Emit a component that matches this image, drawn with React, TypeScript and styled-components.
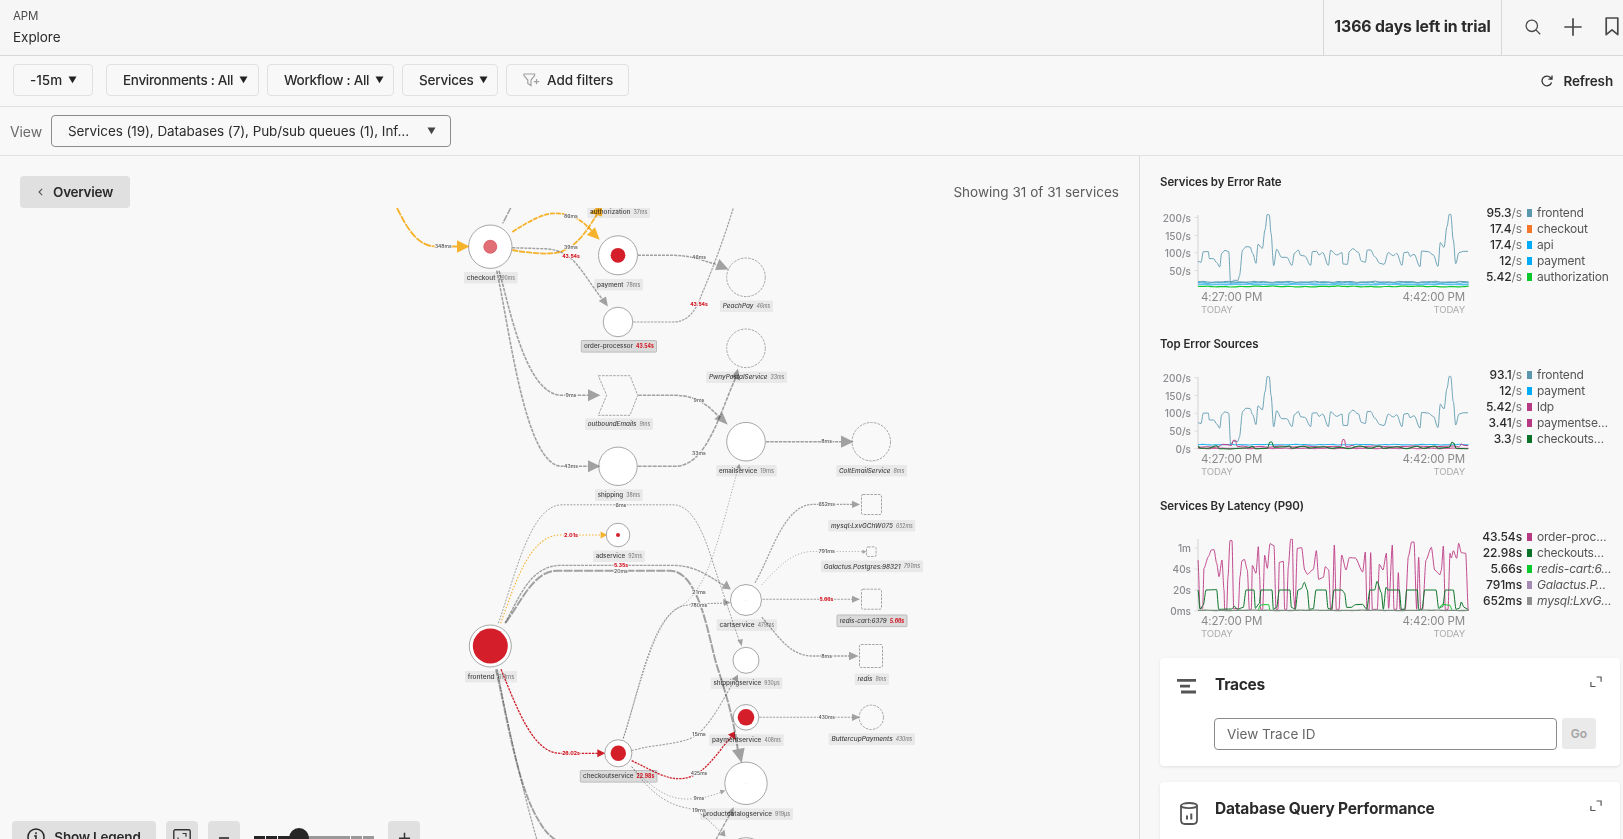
import React from "react";
import styled, { createGlobalStyle } from "styled-components";

const GlobalStyle = createGlobalStyle`
  * { box-sizing: border-box; }
  body { margin: 0; background: #f8f8f8; color: #2b2b2b; font-family: Inter, "Liberation Sans", sans-serif; font-size: 14px; overflow: hidden; }
  button, input { font: inherit; color: inherit; }
`;

const Page = styled.div`
  width: 1623px;
  height: 839px;
  overflow: hidden;
  display: flex;
  flex-direction: column;
`;

const Header = styled.header`
  display: flex;
  height: 56px;
  flex: none;
  background: #f6f6f6;
  border-bottom: 1px solid #d8d8d8;
`;
const Crumbs = styled.div`
  flex: 1;
  padding: 8px 0 0 13px;
`;
const Crumb = styled.div`
  font-size: 11.5px;
  line-height: 16px;
  letter-spacing: -0.2px;
  color: #4a4a4a;
`;
const PageName = styled.div`
  font-size: 13.5px;
  line-height: 20px;
  margin-top: 3px;
  letter-spacing: -0.05px;
`;
const Trial = styled.div`
  width: 179px;
  border: solid #d8d8d8;
  border-width: 0 1px;
  display: flex;
  align-items: center;
  justify-content: center;
  padding-bottom: 2px;
  font-size: 15.8px;
  font-weight: 700;
  letter-spacing: -0.12px;
  white-space: nowrap;
`;
const HeaderIcons = styled.div`
  width: 121px;
  display: flex;
  align-items: center;
  padding: 0 0 2px 23px;
  gap: 23px;
  svg { flex: none; }
`;

const FilterRow = styled.div`
  height: 51px;
  flex: none;
  display: flex;
  align-items: flex-start;
  padding: 8px 10px 0 13px;
  border-bottom: 1px solid #e1e1e1;
`;
const Filter = styled.button<{ $w: number; $gap: number; $ls: number }>`
  width: ${(p) => p.$w}px;
  height: 32px;
  margin-right: ${(p) => p.$gap}px;
  padding: 0 0 0 16px;
  display: flex;
  align-items: center;
  gap: 6px;
  border: 1px solid #e1e1e1;
  border-radius: 4px;
  background: transparent;
  font-size: 13.5px;
  font-weight: 500;
  letter-spacing: ${(p) => p.$ls}px;
  white-space: nowrap;
`;
const Refresh = styled.div`
  margin-left: auto;
  height: 34px;
  display: flex;
  align-items: center;
  gap: 10px;
  font-size: 13.5px;
  font-weight: 600;
  letter-spacing: -0.15px;
`;

const ViewRow = styled.div`
  height: 49px;
  flex: none;
  display: flex;
  align-items: center;
  padding-left: 10px;
  border-bottom: 1px solid #e1e1e1;
`;
const ViewLabel = styled.span`
  width: 41px;
  color: #6b6b6b;
  letter-spacing: -0.1px;
`;
const Select = styled.div`
  width: 400px;
  height: 32px;
  display: flex;
  align-items: center;
  justify-content: space-between;
  padding: 0 14px 0 16px;
  border: 1px solid #8c8c8c;
  border-radius: 4px;
  font-size: 13.5px;
  letter-spacing: -0.08px;
  white-space: nowrap;
`;

const Main = styled.main`
  flex: 1;
  min-height: 0;
  display: flex;
`;
const MapPane = styled.section`
  position: relative;
  width: 1139px;
  flex: none;
  display: flex;
  flex-direction: column;
`;
const MapTop = styled.div`
  height: 52px;
  flex: none;
  display: flex;
  align-items: center;
  justify-content: space-between;
  padding: 20px 20px 0;
`;
const Overview = styled.button`
  width: 110px;
  height: 32px;
  border: 0;
  border-radius: 4px;
  background: #e0e0e0;
  display: flex;
  align-items: center;
  gap: 10px;
  padding: 0 0 0 18px;
  font-size: 13.5px;
  font-weight: 600;
  letter-spacing: -0.25px;
`;
const Showing = styled.span`
  font-size: 13.5px;
  color: #5c5c5c;
  letter-spacing: 0.03px;
`;
const MapSvg = styled.svg`
  display: block;
  flex: none;
`;
const Controls = styled.div`
  position: absolute;
  left: 12px;
  top: 665px;
  display: flex;
  align-items: flex-start;
`;
const ControlButton = styled.button<{ $w: number; $gap: number }>`
  width: ${(p) => p.$w}px;
  height: 32px;
  margin-right: ${(p) => p.$gap}px;
  padding: 0;
  display: flex;
  align-items: center;
  justify-content: center;
  gap: 9px;
  border: 0;
  border-radius: 4px;
  background: #e0e0e0;
  font-size: 13.5px;
  font-weight: 600;
  letter-spacing: -0.2px;
`;
const Slider = styled.div`
  position: relative;
  display: flex;
  gap: 0.7px;
  width: 120px;
  margin: 15px 14px 0 0;
`;
const Segment = styled.i<{ $on: boolean }>`
  flex: 1;
  height: 5px;
  background: ${(p) => (p.$on ? "#262626" : "#999")};
`;
const Knob = styled.i`
  position: absolute;
  left: 35px;
  top: -8px;
  width: 20px;
  height: 20px;
  border-radius: 50%;
  background: #262626;
`;

const Side = styled.aside`
  flex: 1;
  border-left: 1px solid #dcdcdc;
  padding-left: 20px;
`;
const ChartBlock = styled.div`
  height: 162px;
  padding-top: 18px;
`;
const ChartTitle = styled.h3<{ $ls: number }>`
  margin: 0;
  height: 16px;
  line-height: 16px;
  font-size: 11.5px;
  font-weight: 600;
  letter-spacing: ${(p) => p.$ls}px;
`;
const ChartRow = styled.div`
  display: flex;
  margin-top: 15px;
`;
const AxisY = styled.div`
  position: relative;
  width: 31px;
  height: 80px;
  font-size: 10px;
  font-weight: 500;
  color: #8a8a90;
`;
const Tick = styled.span<{ $top: number }>`
  position: absolute;
  right: 0;
  top: ${(p) => p.$top - 6}px;
  line-height: 12px;
  white-space: nowrap;
`;
const Plot = styled.div`
  width: 276px;
  margin-left: 3px;
`;
const Times = styled.div`
  display: flex;
  justify-content: space-between;
  padding: 0 5px 0 7px;
`;
const Time = styled.div<{ $right?: boolean }>`
  text-align: ${(p) => (p.$right ? "right" : "left")};
  font-size: 11.5px;
  line-height: 14px;
  color: #8a8a8a;
  letter-spacing: -0.15px;
`;
const Today = styled.div`
  font-size: 9.6px;
  line-height: 11px;
  color: #acacac;
  letter-spacing: -0.15px;
`;
const Legend = styled.div`
  margin: 0;
  width: 145px;
`;
const LegendItem = styled.div<{ $italic?: boolean }>`
  height: 16px;
  display: flex;
  align-items: center;
  font-size: 12px;
  line-height: 16px;
  letter-spacing: -0.1px;
  white-space: nowrap;
  em { font-style: ${(p) => (p.$italic ? "italic" : "normal")}; color: #555; letter-spacing: -0.2px; }
  b { width: 52px; text-align: right; font-weight: 500; }
  b span { font-weight: 400; color: #777; }
`;
const Swatch = styled.i<{ $c: string }>`
  width: 5px;
  height: 8px;
  margin: 0 5px;
  background: ${(p) => p.$c};
`;

const Card = styled.div<{ $h: number }>`
  position: relative;
  width: 460px;
  height: ${(p) => p.$h}px;
  margin: 16px 0 0;
  padding: 0 0 0 16px;
  display: grid;
  grid-template-columns: 39px 1fr;
  align-content: start;
  border-radius: 4px;
  background: #fff;
  box-shadow: 0 1px 3px rgba(0, 0, 0, 0.1);
`;
const CardIcon = styled.div`
  padding-top: 20px;
`;
const CardHead = styled.div`
  display: flex;
  justify-content: space-between;
  height: 60px;
  padding: 18px 18px 0 0;
`;
const CardTitle = styled.h2<{ $ls: number }>`
  margin: 0;
  font-size: 15.5px;
  line-height: 18px;
  font-weight: 700;
  letter-spacing: ${(p) => p.$ls}px;
`;
const CardForm = styled.div`
  grid-column: 2;
  display: flex;
  gap: 5px;
  margin-left: -1px;
`;
const Input = styled.input`
  width: 343px;
  height: 32px;
  padding: 0 12px;
  border: 1px solid #8c8c8c;
  border-radius: 4px;
  background: #fff;
  font-size: 13.5px;
  outline: none;
  &::placeholder { color: #666; opacity: 1; }
`;
const Go = styled.button`
  width: 34px;
  height: 31px;
  padding: 0;
  border: 0;
  border-radius: 3px;
  background: #eaeaea;
  color: #a3a3a3;
  font-size: 12px;
  font-weight: 600;
`;

const Caret = ({ soft }: { soft?: boolean }) => (
  <svg width="9" height="8" viewBox="0 0 9 8"><path d="M0.5 0.5h8L4.5 7.3z" fill={soft ? "#444" : "#222"} /></svg>
);
const ExpandIcon = () => (
  <svg width="12" height="12" viewBox="0 0 12 12" fill="none" stroke="#555" strokeWidth="1.2"><path d="M6.5 1h4.6v4.8M.9 6v4.5h4.6" /></svg>
);

/* ---------- service map ---------- */
type Shape = "circle" | "square" | "chevron";
interface NodeDef {
  name: string; ms: string; x: number; y: number; r: number; box: [number, number, number];
  red?: number; pink?: boolean; inferred?: boolean; hot?: boolean; shape?: Shape;
}
const nodes: NodeDef[] = [
  { name: "authorization", ms: "37ms", x: 618, y: 176, r: 19, box: [587.3, 650, 206.3] },
  { name: "checkout", ms: "290ms", x: 490.3, y: 246.7, r: 21.7, red: 6.7, pink: true, box: [464, 517.7, 272] },
  { name: "payment", ms: "78ms", x: 618, y: 255.3, r: 19.5, red: 7.4, box: [594.3, 643, 279] },
  { name: "order-processor", ms: "43.54s", x: 618, y: 322, r: 14.8, hot: true, box: [581.3, 656.5, 340.5] },
  { name: "outboundEmails", ms: "9ms", x: 618, y: 395.3, r: 19, inferred: true, shape: "chevron", box: [585, 653, 418.3] },
  { name: "shipping", ms: "38ms", x: 618, y: 466.3, r: 19.2, box: [595, 642.7, 489.3] },
  { name: "PeachPay", ms: "46ms", x: 746, y: 277.3, r: 19.3, inferred: true, box: [720, 773, 300.4] },
  { name: "PwnyPostalService", ms: "33ms", x: 746, y: 348.3, r: 19.3, inferred: true, box: [706.3, 787, 371.4] },
  { name: "emailservice", ms: "19ms", x: 746, y: 441.7, r: 19.3, box: [716.3, 776.7, 465] },
  { name: "ColtEmailService", ms: "8ms", x: 871.3, y: 441.7, r: 19.2, inferred: true, box: [836.3, 907, 465] },
  { name: "adservice", ms: "92ms", x: 618, y: 535, r: 11.8, red: 2, box: [593, 644.7, 550.5] },
  { name: "cartservice", ms: "479ms", x: 746, y: 600, r: 15.5, red: 0.3, box: [716.7, 777, 619.3] },
  { name: "shippingservice", ms: "930µs", x: 746, y: 660.3, r: 13, box: [710.7, 782.3, 677.4] },
  { name: "paymentservice", ms: "408ms", x: 746, y: 717.3, r: 12.8, red: 8.3, box: [709.3, 783.7, 734.3] },
  { name: "productcatalogservice", ms: "919µs", x: 746, y: 783.3, r: 21.2, red: 0.2, box: [700.3, 793, 808.3] },
  { name: "", ms: "", x: 746, y: 859, r: 21.3, box: [0, 0, 0] },
  { name: "mysql:LxvGChW075", ms: "652ms", x: 871.5, y: 504.5, r: 10, inferred: true, shape: "square", box: [828.3, 915.3, 520] },
  { name: "Galactus.Postgres:98321", ms: "791ms", x: 871.3, y: 551.7, r: 4.8, inferred: true, shape: "square", box: [821, 923, 560.6] },
  { name: "redis-cart:6379", ms: "5.66s", x: 871.5, y: 599.2, r: 10, inferred: true, hot: true, shape: "square", box: [837, 907, 615] },
  { name: "redis", ms: "8ms", x: 871, y: 656, r: 11.5, inferred: true, shape: "square", box: [854.7, 889, 673.4] },
  { name: "ButtercupPayments", ms: "430ms", x: 871.3, y: 717.3, r: 12.2, inferred: true, box: [828.7, 915, 733.3] },
  { name: "frontend", ms: "611ms", x: 490.3, y: 646, r: 21, red: 17.5, box: [465, 517, 671] },
  { name: "checkoutservice", ms: "22.98s", x: 618.3, y: 753.3, r: 13.6, red: 7.7, hot: true, box: [580.3, 657, 770.5] },
];

const GRAY = "#a6a6a6";
const ORANGE = "#fdb72c";
const RED = "#d41f2a";
interface EdgeDef { d: string; w?: number; dash?: string; c?: string; head?: string; label?: [string, number, number]; hotLabel?: boolean }
const edges: EdgeDef[] = [
  { d: "M397 208C408 230 418 246.3 436 246.5H458", w: 1.8, dash: "8 1", c: ORANGE, head: "457,240.2 469.5,246.5 457,252.8", label: ["348ms", 443.3, 246.4] },
  { d: "M510.7 208L502.7 223.3", w: 1.5, dash: "7 1" },
  { d: "M512.3 232C532 219 545 213.3 555 213.3C575 213.3 584 223 592 231", w: 1.8, dash: "5 1", c: ORANGE, head: "586.8,235 595,227.3 599.7,239.7", label: ["86ms", 571, 216.2] },
  { d: "M512.3 247.7L546 248.8C575 251 580 271 603 300", w: 1.4, dash: "3 1", head: "598.7,301 606,296.4 607.9,306.5", label: ["43.54s", 571, 256.2], hotLabel: true },
  { d: "M512.3 250C527 253 552 255.5 562 251.3C580 244 588 228 598 213", w: 1.8, dash: "6 1", c: ORANGE, head: "590,213 602,216.5 602,203", label: ["39ms", 571, 247.3] },
  { d: "M499 270.7C509 304 525 395.3 562 395.3H589", w: 1.6, dash: "3.5 1", head: "588,389.3 600.4,395.3 588,401.3", label: ["9ms", 571, 395.3] },
  { d: "M496.7 270.7C510 330 525 466.3 562 466.3H589", w: 1.6, dash: "3.5 1", head: "588,460.3 600.4,466.3 588,472.3", label: ["43ms", 571, 466.3] },
  { d: "M638 255.3H673C692 255.5 704 261 718 265", w: 1.5, dash: "3 1", head: "715,270 719.3,259 728.6,269.4", label: ["46ms", 699, 257] },
  { d: "M633.3 322H673C694 322 699 300 704 289C715 263 725 235 733.3 208", w: 1.2, dash: "2.5 1", label: ["43.54s", 699, 304.2], hotLabel: true },
  { d: "M638.3 395.3H675C697 395.5 709 406 719 417", w: 1.6, dash: "3.5 1", head: "714.3,419 722.5,412.8 727.8,424.8", label: ["9ms", 699, 400.2] },
  { d: "M637.7 466.3H675C707 466.3 720 412 736 377", w: 1.6, dash: "4 1", head: "731.3,377 740,380.5 738,368.5", label: ["33ms", 699, 453.2] },
  { d: "M766 441.7H842", w: 1.6, dash: "3.5 .8", head: "841,435.6 853.6,441.7 841,447.8", label: ["8ms", 826.7, 441.3] },
  { d: "M498.3 623.3C515 577 530 504.8 562 504.8H673C698 504.8 709 552 718 578L739 640", w: 1, dash: "2 1.3", head: "737.4,640.3 742.8,639.1 741.7,646.2", label: ["6ms", 621, 505.2] },
  { d: "M500.7 623.3C515 583 530 535.3 560 535H601", w: 1.1, dash: "1.5 1.7", c: ORANGE, head: "600.6,531.6 606.9,535 600.6,538.4", label: ["2.01s", 571, 535], hotLabel: true },
  { d: "M505 623.3C519 598 530 566 560 565.4H673C696 565.4 710 577 725 586", w: 1.4, dash: "3 .9", head: "721.6,588.5 726.7,580.6 730.9,589.4" },
  { d: "M505.7 622.7C522 600 534 571 557 570.7H670C702 571 710 650 719 672C727 697 735 725 738 752", w: 2, dash: "9 1.3", head: "732,750.3 744.6,747.8 741.7,763" },
  { d: "M501 669.3C517 708 533 753.3 560 753.3H598", w: 1.3, dash: "2.4 1", c: RED, head: "597.3,749.3 605.2,753.3 597.3,757.3", label: ["26.02s", 571, 753.2], hotLabel: true },
  { d: "M496 669.3C507 718 518 788 539 821Q546 834 556 840", w: 1.9, dash: "7 1" },
  { d: "M497.3 669.3C506 718 523 792 537 840", w: 1.2, dash: "2.5 1" },
  { d: "M623.3 738.3C640 687 653 611 685 605.5C700 602.5 713 604 724 603", w: 1.1, dash: "2 1.1", head: "723,599 730.6,602.4 724,606", label: ["780ms", 699, 605.2] },
  { d: "M623.3 738.3C640 687 654 621 678 608C692 600 699 588 707 571C717 548 727 510 738 468", w: 0.9, dash: "1.2 1.8", head: "736.2,468 741,469.2 739.3,463.8", label: ["21ms", 699, 592.2] },
  { d: "M631.7 750.7C650 745 670 745 686 740C705 736 720 705 734 681", w: 1.1, dash: "2.2 1.3", head: "731.7,679 738,682 738,674.4", label: ["15ms", 699, 734] },
  { d: "M631.7 760.7C650 769 664 778.7 678.5 778.7C703 779 716 754 731 737", w: 1.3, dash: "2.2 1", c: RED, head: "728,734.5 735.5,740 734.8,731.6", label: ["425ms", 699, 773] },
  { d: "M631.7 766.7C651 787 666 799 687 799C703 799 713 795 722 792", w: 0.9, dash: "1.3 1.7", head: "719.8,789.7 721.2,794.5 725.3,790.4", label: ["9ms", 699, 798.3] },
  { d: "M631.7 766.7C651 794 669 805 687 808C704 812 713 826 722 833", w: 1, dash: "1.8 1.5", head: "719.2,835 724.5,829.4 725.5,836.6", label: ["19ms", 699, 810] },
  { d: "M715.7 840L730 814", w: 1.4, dash: "4 1", head: "726.5,813.7 733.5,816.2 733.7,807" },
  { d: "M755 582.7C771 556 783 506 812 504.4H853", w: 1.2, dash: "2.3 1", head: "852,500.8 860,504.4 852,508", label: ["652ms", 826.7, 504.1] },
  { d: "M761.7 585C774 572 790 551.7 812 551.5H863", w: 0.9, dash: "1 2", head: "862.3,549.7 866.6,551.7 862.3,553.7", label: ["791ms", 826.7, 551.1] },
  { d: "M762.7 599.3H853", w: 1.1, dash: "2.3 1.1", head: "852,595.7 860,599.2 852,602.7", label: ["5.66s", 826.4, 599], hotLabel: true },
  { d: "M761.7 617.3C775 631 788 656 812 656H850", w: 1.3, dash: "2.5 1", head: "849,651.7 858.6,656 849,660.3", label: ["8ms", 826.7, 656] },
  { d: "M759.3 717.3H853", w: 1.1, dash: "2.3 1.1", head: "852,713.7 860,717.3 852,720.9", label: ["430ms", 826.7, 717.1] },
];

const latencyWidth = (s: string) =>
  s === "5.66s" ? 14.5 : s.endsWith("µs") ? 15.3 : s.length === 3 ? 10.8 : s.length === 4 ? 13.8 : s.length === 5 ? 16.6 : 17.7;

const Latency = styled.text<{ $hot?: boolean }>`
  font-size: 5.5px;
  font-weight: ${(p) => (p.$hot ? 800 : 500)};
  fill: ${(p) => (p.$hot ? RED : "#848484")};
`;
const NodeName = styled.text`
  font-size: 6.1px;
  font-weight: 500;
  fill: #444;
`;
const EdgeLabel = styled.text<{ $hot?: boolean }>`
  font-size: 5.4px;
  font-weight: ${(p) => (p.$hot ? 800 : 500)};
  fill: ${(p) => (p.$hot ? RED : "#555")};
  stroke: #f8f8f8;
  stroke-width: 1.6px;
  paint-order: stroke;
`;
/* connectors darken the labels they cross instead of hiding them */
const EdgeGroup = styled.g`
  mix-blend-mode: multiply;
`;

function MapNode({ n }: { n: NodeDef }) {
  const line = { stroke: GRAY, strokeWidth: 1, strokeDasharray: n.inferred ? "2.6 1.1" : undefined, fill: n.inferred ? "#f9f9f9" : "#fff" };
  const [x1, x2, y] = n.box;
  const msW = latencyWidth(n.ms);
  const nameW = x2 - x1 - 5.4 - msW - 3;
  return (
    <g fontStyle={n.inferred ? "italic" : undefined}>
      {n.shape === "chevron" ? (
        <path d="M598.3 375.7H630L637.7 395.3L630 415.3H598.3L606.7 395.3Z" {...line} />
      ) : n.shape === "square" ? (
        <rect x={n.x - n.r} y={n.y - n.r} width={n.r * 2} height={n.r * 2} rx={1.5} {...line} />
      ) : (
        <circle cx={n.x} cy={n.y} r={n.r} {...line} />
      )}
      {n.red && <circle cx={n.x} cy={n.y} r={n.red} fill={n.pink ? "url(#hatch)" : RED} />}
      {n.name && (
        <>
          <rect x={x1} y={y} width={x2 - x1} height={11.6} rx={0.8} fill={n.hot ? "#dadada" : "#e9e9e9"} stroke={n.hot ? "#bcbcbc" : "none"} />
          <NodeName x={x1 + 2.7} y={y + 7.9} textLength={nameW} lengthAdjust="spacingAndGlyphs">{n.name}</NodeName>
          <Latency $hot={n.hot} x={x2 - 2.7 - msW} y={y + 7.8} textLength={msW} lengthAdjust="spacingAndGlyphs">{n.ms}</Latency>
        </>
      )}
    </g>
  );
}

function MapEdge({ e }: { e: EdgeDef }) {
  return (
    <EdgeGroup>
      <path d={e.d} fill="none" stroke={e.c ?? GRAY} strokeWidth={e.w} strokeDasharray={e.dash} />
      {e.head && <polygon points={e.head} fill={e.c ?? GRAY} />}
    </EdgeGroup>
  );
}

const edgeLabels: { t: string; x: number; y: number; hot?: boolean }[] = [
  ...edges.filter((e) => e.label).map((e) => ({ t: e.label![0], x: e.label![1], y: e.label![2], hot: e.hotLabel })),
  { t: "20ms", x: 621, y: 570.8 },
  { t: "5.35s", x: 621, y: 565.3, hot: true },
];

const ServiceMap = () => (
  <MapSvg width="1139" height="631" viewBox="0 208 1139 631">
    <defs>
      <pattern id="hatch" width="1.4" height="1.4" patternUnits="userSpaceOnUse">
        <rect width="1.4" height="1.4" fill="#ea8a8f" />
        <path d="M0 0L1.4 1.4M1.4 0L0 1.4" stroke="#d9545c" strokeWidth=".35" />
      </pattern>
    </defs>
    {nodes.map((n, i) => <MapNode key={i} n={n} />)}
    {edges.map((e, i) => <MapEdge key={i} e={e} />)}
    <circle cx={490.3} cy={246.7} r={6.5} fill="none" stroke="#d9535b" strokeWidth=".6" />
    {edgeLabels.map((l, i) => {
      const w = l.t === "5.66s" || l.t === "5.35s" || l.t === "2.01s" ? 14 : latencyWidth(l.t);
      return (
        <EdgeLabel key={i} $hot={l.hot} x={l.x - w / 2} y={l.y + 1.9} textLength={w} lengthAdjust="spacingAndGlyphs">{l.t}</EdgeLabel>
      );
    })}
  </MapSvg>
);

/* ---------- charts ---------- */
const parse = (s: string) => s.trim().split(/\s+/).map((p) => p.split(",").map(Number) as [number, number]);
const smooth = (pts: [number, number][], k = 0.35) =>
  pts.map(([x, y], i) => {
    if (!i) return `M${x} ${y}`;
    const [px, py] = pts[i - 1];
    const dx = (x - px) * k;
    return `C${px + dx} ${py} ${x - dx} ${y} ${x} ${y}`;
  }).join("");
const wave = (base: number, amp: number, seed: number): [number, number][] =>
  Array.from({ length: 59 }, (_, i) => [174 + i * 14, base + Math.round(Math.sin(i * seed) * Math.cos(i * 0.7 + seed) * amp * 10) / 10]);

const frontend = parse(`174,274 183,277 190,245 205,245 208,266 221,266 230,278 239,291 245,250 255,241 266,245 272,340 280,331 294,331 298,318 308,240 318,230 330,231 338,250 348,280 354,223 367,235 375,180 382,133 388,135 393,190 401,287 410,238 425,262 440,262 456,286 463,250 475,240 482,256 494,258 512,286 517,245 530,244 537,255 548,248 565,286 572,241 590,255 606,248 609,282 622,283 628,245 638,236 655,247 664,273 676,277 682,240 692,240 704,260 720,280 732,283 745,248 760,257 770,250 786,286 792,248 804,246 810,259 822,253 840,290 845,243 865,245 880,255 894,289 901,218 912,232 921,170 928,133 932,133 940,210 947,281 957,248 970,244 984,244`);
const frontendSources = frontend.map(([x, y]) => [x, 139 + (y - 133) * 0.985] as [number, number]);
const orderProcessor = parse(`174,210 180,355 188,355 192,235 205,200 214,180 222,179 230,220 237,260 246,210 252,300 254,358 260,358 264,260 270,152 276,152 281,356 295,356 300,260 306,212 313,208 322,240 328,358 334,358 337,226 348,250 355,170 359,260 362,358 368,358 374,196 382,235 390,161 402,167 408,358 414,358 418,217 430,214 434,358 440,358 445,230 452,148 457,148 461,320 465,358 472,175 485,173 494,240 502,253 520,238 529,182 536,268 550,262 556,230 566,240 572,358 577,358 583,165 589,358 597,358 605,195 618,240 628,203 646,204 668,246 676,186 681,358 687,358 692,188 697,358 712,358 718,223 729,240 739,190 746,355 757,165 762,358 770,358 775,248 780,358 796,358 805,200 815,156 822,156 830,358 836,202 842,358 848,358 858,210 874,172 884,240 900,254 904,240 910,168 916,358 924,358 930,190 934,204 940,182 950,205 956,160 964,188 977,190 985,362`);
const checkouts = parse(`174,300 180,358 190,345 198,300 230,299 236,358 275,357 284,349 292,358 310,352 318,300 342,300 346,355 358,340 363,300 396,300 400,358 410,352 418,300 450,300 454,352 466,358 474,300 484,296 493,277 502,300 508,358 520,356 528,300 558,300 564,355 574,358 582,300 606,300 614,310 620,352 634,352 646,344 668,343 680,358 690,300 704,300 711,274 724,308 730,358 738,292 744,300 778,300 784,358 794,358 800,300 832,300 836,358 846,358 854,300 888,300 896,355 908,350 916,300 940,300 948,358 958,355 964,336 972,352 984,358`);

interface Series { pts: [number, number][]; c: string; w?: number; k?: number }
const SLATE = "#5f9bb0", SKY = "#25b4ef", GREEN = "#10c92f", PINK = "#bd3d87", FOREST = "#0c7429";

interface ChartDef {
  title: string; ls: number; y0: number; ticks: [string, number][]; series: Series[];
  legend: { v: string; unit?: string; c: string; name: string; italic?: boolean }[];
}
const charts: ChartDef[] = [
  {
    title: "Services by Error Rate", ls: -0.08, y0: 120,
    ticks: [["200/s", 7.5], ["150/s", 25.5], ["100/s", 42.7], ["50/s", 60.5]],
    series: [
      { pts: wave(343, 1, 1.3), c: "#58c3f4", w: 5 },
      { pts: wave(338, 2, 2.1), c: "#1f9fd0", w: 2.5 },
      { pts: wave(335.5, 2, 1.7), c: SLATE, w: 3 },
      { pts: wave(349.5, 1.6, 1.1), c: GREEN, w: 3.6 },
      { pts: frontend, c: SLATE },
    ],
    legend: [
      { v: "95.3", unit: "/s", c: "#5b98ad", name: "frontend" },
      { v: "17.4", unit: "/s", c: "#f4772a", name: "checkout" },
      { v: "17.4", unit: "/s", c: "#00acf8", name: "api" },
      { v: "12", unit: "/s", c: "#00acf8", name: "payment" },
      { v: "5.42", unit: "/s", c: "#0bc82c", name: "authorization" },
    ],
  },
  {
    title: "Top Error Sources", ls: -0.08, y0: 126,
    ticks: [["200/s", 5.7], ["150/s", 23.5], ["100/s", 41.3], ["50/s", 59], ["0/s", 76.7]],
    series: [
      { pts: frontendSources, c: SLATE },
      { pts: wave(344, 1.2, 1.6), c: SKY, w: 3.2 },
      { pts: wave(355, 1, 2.1), c: "#c965a1", w: 4 },
      { pts: parse("174,352 200,350 225,352 240,348 247,343 262,344 274,347 280,331 286,331 292,350 310,348 330,352 360,349 385,352 420,348 460,351 500,348 540,351 580,349 603,350 608,329 613,329 618,350 626,350 636,346 646,351 700,348 760,351 820,348 880,350 940,348 958,351 964,342 972,346 984,347"), c: PINK, w: 3 },
      { pts: parse("174,349 182,355 205,355 230,347 238,356 270,357 325,353 338,349 346,356 382,355 390,336 395,336 402,352 440,350 448,348 456,355 490,349 512,354 550,350 575,355 605,352 625,356 660,348 690,355 718,348 730,355 770,350 800,356 830,349 850,355 884,348 895,355 928,352 936,337 942,340 948,355 984,356"), c: FOREST, w: 3.2 },
    ],
    legend: [
      { v: "93.1", unit: "/s", c: "#5b98ad", name: "frontend" },
      { v: "12", unit: "/s", c: "#00acf8", name: "payment" },
      { v: "5.42", unit: "/s", c: "#b93a84", name: "ldp" },
      { v: "3.41", unit: "/s", c: "#b93a84", name: "paymentse…" },
      { v: "3.3", unit: "/s", c: "#0b7327", name: "checkouts…" },
    ],
  },
  {
    title: "Services By Latency (P90)", ls: -0.12, y0: 132,
    ticks: [["1m", 14], ["40s", 35], ["20s", 56], ["0ms", 76.8]],
    series: [
      { pts: orderProcessor, c: PINK, w: 2.8, k: 0.25 },
      { pts: checkouts, c: FOREST, w: 3, k: 0.25 },
      { pts: parse("355,360 360,346 370,344 386,344 390,360"), c: GREEN, w: 3 },
      { pts: parse("898,352 908,343 930,346 936,360"), c: GREEN, w: 3 },
      { pts: wave(361, 0.8, 1.2), c: "#7d8f82", w: 4 },
    ],
    legend: [
      { v: "43.54s", c: "#b93a84", name: "order-proc…" },
      { v: "22.98s", c: "#0b7327", name: "checkouts…" },
      { v: "5.66s", c: "#0bc82c", name: "redis-cart:6…", italic: true },
      { v: "791ms", c: "#a58bb4", name: "Galactus.P…", italic: true },
      { v: "652ms", c: "#8f8f8f", name: "mysql:LxvG…", italic: true },
    ],
  },
];

const PlotSvg = styled.svg`
  display: block;
  margin-top: 5px;
`;

const Chart = ({ c }: { c: ChartDef }) => (
  <ChartBlock>
    <ChartTitle $ls={c.ls}>{c.title}</ChartTitle>
    <ChartRow>
      <AxisY>{c.ticks.map(([t, y]) => <Tick key={t} $top={y + 5}>{t}</Tick>)}</AxisY>
      <Plot>
        <PlotSvg width="276" height="80" viewBox={`162 ${c.y0} 828 240`}>
          <path d={`M174 ${c.y0 + 15}V${c.y0 + 231}`} stroke="#e2e2e2" strokeWidth="5" />
          {c.ticks.map(([t, y]) => <path key={t} d={`M163 ${c.y0 + y * 3}H174`} stroke="#dedede" strokeWidth="3" />)}
          {c.series.map((s, i) => <path key={i} d={smooth(s.pts, s.k)} fill="none" stroke={s.c} strokeWidth={s.w ?? 2.7} strokeLinejoin="round" />)}
        </PlotSvg>
        <Times>
          <Time>4:27:00 PM<Today>TODAY</Today></Time>
          <Time $right>4:42:00 PM<Today>TODAY</Today></Time>
        </Times>
      </Plot>
      <Legend>
        {c.legend.map((l, i) => (
          <LegendItem key={i} $italic={l.italic}>
            <b>{l.v}<span>{l.unit}</span></b><Swatch $c={l.c} /><em>{l.name}</em>
          </LegendItem>
        ))}
      </Legend>
    </ChartRow>
  </ChartBlock>
);

export default function App() {
  return (
    <Page>
      <GlobalStyle />
      <Header>
        <Crumbs>
          <Crumb>APM</Crumb>
          <PageName>Explore</PageName>
        </Crumbs>
        <Trial>1366 days left in trial</Trial>
        <HeaderIcons>
          <svg width="16" height="16" viewBox="0 0 16 16" fill="none" stroke="#4a4a4a" strokeWidth="1.3"><circle cx="6.8" cy="6.8" r="5.7" /><path d="M10.9 10.9L15.2 15.2" /></svg>
          <svg width="18" height="18" viewBox="0 0 18 18" stroke="#4a4a4a" strokeWidth="1.7"><path d="M9 .3v17.4M.3 9h17.4" /></svg>
          <svg width="14" height="19" viewBox="0 0 14 19" fill="none" stroke="#4a4a4a" strokeWidth="1.7" strokeLinejoin="round"><path d="M1.2 1h11.6v16.6L7 12.8L1.2 17.6z" /></svg>
        </HeaderIcons>
      </Header>
      <FilterRow>
        <Filter $w={80} $gap={13} $ls={-0.02}>-15m<Caret /></Filter>
        <Filter $w={153} $gap={8} $ls={-0.32}>Environments : All<Caret /></Filter>
        <Filter $w={127} $gap={8} $ls={-0.3}>Workflow : All<Caret /></Filter>
        <Filter $w={96} $gap={8} $ls={-0.22}>Services<Caret /></Filter>
        <Filter $w={123} $gap={0} $ls={-0.05}>
          <svg width="18" height="14" viewBox="0 0 18 14" fill="none" stroke="#a0a0a0" strokeWidth="1.2"><path d="M1 1h10.6v1.6L8 7v5.6L4.8 10.4V7L1 2.6zM10.8 8.6h5.4M13.5 5.9v5.4" /></svg>
          Add filters
        </Filter>
        <Refresh>
          <svg width="12" height="12" viewBox="0 0 12 12" fill="none" stroke="#333" strokeWidth="1.3"><path d="M10.6 7.4A4.9 4.9 0 1 1 9.6 2.7L10.9 4M11 .6V4.1H7.4" /></svg>
          Refresh
        </Refresh>
      </FilterRow>
      <ViewRow>
        <ViewLabel>View</ViewLabel>
        <Select>Services (19), Databases (7), Pub/sub queues (1), Inf…<Caret soft /></Select>
      </ViewRow>
      <Main>
        <MapPane>
          <MapTop>
            <Overview>
              <svg width="5" height="8" viewBox="0 0 5 8" fill="none" stroke="#555" strokeWidth="1.1"><path d="M4.2 .8L1 4L4.2 7.2" /></svg>
              Overview
            </Overview>
            <Showing>Showing 31 of 31 services</Showing>
          </MapTop>
          <ServiceMap />
          <Controls>
            <ControlButton $w={144} $gap={10}>
              <svg width="18" height="18" viewBox="0 0 18 18" fill="none" stroke="#262626" strokeWidth="1.5"><circle cx="9" cy="9" r="8" /><path d="M9 4.3v1.9M7.2 8H9v5" /></svg>
              Show Legend
            </ControlButton>
            <ControlButton $w={32} $gap={10}>
              <svg width="18" height="16" viewBox="0 0 18 16" fill="none" stroke="#333" strokeWidth="1.4"><rect x=".8" y=".8" width="16.4" height="14.4" rx="1.5" /><path d="M9.5 4.5H13v3.2M5 8.5v3.2h3.5" strokeWidth="1.2" /></svg>
            </ControlButton>
            <ControlButton $w={32} $gap={14}>
              <svg width="10" height="10" viewBox="0 0 10 10" stroke="#333" strokeWidth="1.7"><path d="M0 6H10" /></svg>
            </ControlButton>
            <Slider>
              {Array.from({ length: 10 }, (_, i) => <Segment key={i} $on={i < 4} />)}
              <Knob />
            </Slider>
            <ControlButton $w={32} $gap={0}>
              <svg width="11" height="11" viewBox="0 0 11 11" stroke="#333" strokeWidth="1.5"><path d="M0 6.2H11M5.5 .7V11" /></svg>
            </ControlButton>
          </Controls>
        </MapPane>
        <Side>
          {charts.map((c) => <Chart key={c.title} c={c} />)}
          <Card $h={108}>
            <CardIcon>
              <svg width="21" height="16" viewBox="0 0 21 16" stroke="#555" strokeWidth="2.8"><path d="M1 2.4H20M4 8.2H14M5 14H20" /></svg>
            </CardIcon>
            <CardHead>
              <CardTitle $ls={-0.28}>Traces</CardTitle>
              <ExpandIcon />
            </CardHead>
            <CardForm>
              <Input placeholder="View Trace ID" />
              <Go>Go</Go>
            </CardForm>
          </Card>
          <Card $h={108}>
            <CardIcon>
              <svg width="24" height="24" viewBox="0 0 24 24" fill="none" stroke="#555" strokeWidth="1.8"><path d="M5 3.6V18Q5 22 9 22H17Q21 22 21 18V3.6" /><ellipse cx="13" cy="3.6" rx="8" ry="2.6" /><path d="M11 13.5v4M15.3 11.5v6" strokeWidth="2" /></svg>
            </CardIcon>
            <CardHead>
              <CardTitle $ls={-0.19}>Database Query Performance</CardTitle>
              <ExpandIcon />
            </CardHead>
          </Card>
        </Side>
      </Main>
    </Page>
  );
}
